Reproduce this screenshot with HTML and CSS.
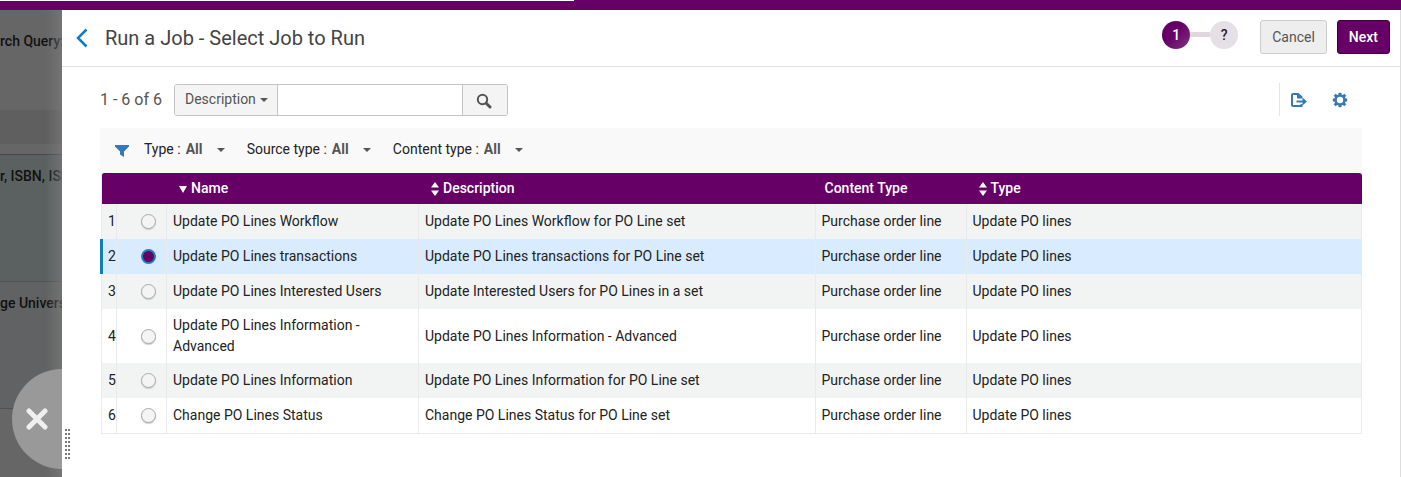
FILE: index.html
```
<!DOCTYPE html>
<html lang="en">
<head>
    <meta charset="UTF-8">
    <meta name="viewport" content="width=device-width, initial-scale=1.0">
    <title>Run a Job - Select Job to Run</title>
    <link rel="stylesheet" href="styles.css">
</head>
<body>
    <div class="top-bar"><div class="top-bar-edge"></div></div>
    <div class="layout">
        <aside class="backdrop">
            <div class="backdrop-query">rch Query:</div>
            <div class="backdrop-band"></div>
            <div class="backdrop-gap"></div>
            <div class="backdrop-record">r, ISBN, ISSN</div>
            <div class="backdrop-owner">ge University</div>
            <div class="backdrop-rest"></div>
            <button class="close-btn" type="button" aria-label="Close">
                <svg width="22" height="22" viewBox="0 0 22 22"><path d="M3 3L19 19M19 3L3 19" stroke="#f0f0f0" stroke-width="5" stroke-linecap="round"/></svg>
            </button>
        </aside>

        <main class="panel">
            <div class="drag-handle"></div>
            <header class="panel-header">
                <a class="back-link" href="#" aria-label="Back">
                    <svg width="12" height="20" viewBox="0 0 12 20"><path d="M10.500 1.500L2 10L10.500 18.500" fill="none" stroke="#0f7dc2" stroke-width="2.500"/></svg>
                </a>
                <h1>Run a Job - Select Job to Run</h1>
                <div class="steps">
                    <span class="step step-active">1</span>
                    <span class="step-line"></span>
                    <span class="step">?</span>
                </div>
                <button class="btn" type="button">Cancel</button>
                <button class="btn btn-primary" type="button">Next</button>
            </header>

            <section class="content">
                <div class="toolbar">
                    <span class="count">1 - 6 of 6</span>
                    <form class="search">
                        <button class="search-field" type="button">Description <span class="caret"></span></button>
                        <input class="search-input" type="text" aria-label="Search text">
                        <button class="search-btn" type="button" aria-label="Search">
                            <svg width="16" height="16" viewBox="0 0 16 16"><circle cx="6.500" cy="6.500" r="4.700" fill="none" stroke="#555" stroke-width="2"/><path d="M10.200 10.200L14 14" stroke="#555" stroke-width="3" stroke-linecap="round"/></svg>
                        </button>
                    </form>
                    <div class="tools">
                        <button class="icon-btn" type="button" aria-label="Export">
                            <svg width="18" height="16" viewBox="0 0 18 16"><path d="M11.500 6V5L8 2H3Q2 2 2 3V13Q2 14 3 14H11.500V12" fill="none" stroke="#337ab7" stroke-width="2"/><path d="M7 1V6.500H12.500Z" fill="#337ab7"/><path d="M6.500 9.500H14" stroke="#337ab7" stroke-width="2"/><path d="M12.500 5.500L17 9.500L12.500 13.500Z" fill="#337ab7"/></svg>
                        </button>
                        <button class="icon-btn" type="button" aria-label="Settings">
                            <svg width="16" height="16" viewBox="0 0 16 16"><circle cx="8" cy="8" r="4.500" fill="none" stroke="#337ab7" stroke-width="2.600"/><path d="M8 .8V3M8 13V15.200M.8 8H3M13 8H15.200M2.700 2.700L4.500 4.500M11.500 11.500L13.300 13.300M13.300 2.700L11.500 4.500M4.500 11.500L2.700 13.300" stroke="#337ab7" stroke-width="3"/></svg>
                        </button>
                    </div>
                </div>

                <div class="filters">
                    <svg class="filter-icon" width="14" height="12" viewBox="0 0 14 12"><path d="M0 0H14V1.500L9 6.500V12L5 9.500V6.500L0 1.500Z" fill="#337ab7"/></svg>
                    <div class="filter">
                        <label for="type">Type :</label>
                        <span class="filter-select"><select id="type"><option>All</option></select></span>
                    </div>
                    <div class="filter">
                        <label for="sourceType">Source type :</label>
                        <span class="filter-select"><select id="sourceType"><option>All</option></select></span>
                    </div>
                    <div class="filter">
                        <label for="contentType">Content type :</label>
                        <span class="filter-select"><select id="contentType"><option>All</option></select></span>
                    </div>
                </div>

                <table class="jobs">
                    <colgroup>
                        <col class="col-number">
                        <col class="col-radio">
                        <col class="col-name">
                        <col>
                        <col class="col-content">
                        <col>
                    </colgroup>
                    <thead>
                        <tr>
                            <th></th>
                            <th></th>
                            <th class="sortable"><svg width="8" height="14" viewBox="0 0 8 14"><path d="M0 4H8L4 11Z" fill="#fff"/></svg>Name</th>
                            <th class="sortable"><svg width="8" height="14" viewBox="0 0 8 14"><path d="M0 5.500H8L4 0ZM0 8.500H8L4 14Z" fill="#fff"/></svg>Description</th>
                            <th>Content Type</th>
                            <th class="sortable"><svg width="8" height="14" viewBox="0 0 8 14"><path d="M0 5.500H8L4 0ZM0 8.500H8L4 14Z" fill="#fff"/></svg>Type</th>
                        </tr>
                    </thead>
                    <tbody>
                        <tr>
                            <td>1</td>
                            <td><input type="radio" name="job" id="job1"></td>
                            <td><label for="job1">Update PO Lines Workflow</label></td>
                            <td>Update PO Lines Workflow for PO Line set</td>
                            <td>Purchase order line</td>
                            <td>Update PO lines</td>
                        </tr>
                        <tr class="selected">
                            <td>2</td>
                            <td><input type="radio" name="job" id="job2" checked></td>
                            <td><label for="job2">Update PO Lines transactions</label></td>
                            <td>Update PO Lines transactions for PO Line set</td>
                            <td>Purchase order line</td>
                            <td>Update PO lines</td>
                        </tr>
                        <tr>
                            <td>3</td>
                            <td><input type="radio" name="job" id="job3"></td>
                            <td><label for="job3">Update PO Lines Interested Users</label></td>
                            <td>Update Interested Users for PO Lines in a set</td>
                            <td>Purchase order line</td>
                            <td>Update PO lines</td>
                        </tr>
                        <tr>
                            <td>4</td>
                            <td><input type="radio" name="job" id="job4"></td>
                            <td><label for="job4">Update PO Lines Information - Advanced</label></td>
                            <td>Update PO Lines Information - Advanced</td>
                            <td>Purchase order line</td>
                            <td>Update PO lines</td>
                        </tr>
                        <tr>
                            <td>5</td>
                            <td><input type="radio" name="job" id="job5"></td>
                            <td><label for="job5">Update PO Lines Information</label></td>
                            <td>Update PO Lines Information for PO Line set</td>
                            <td>Purchase order line</td>
                            <td>Update PO lines</td>
                        </tr>
                        <tr>
                            <td>6</td>
                            <td><input type="radio" name="job" id="job6"></td>
                            <td><label for="job6">Change PO Lines Status</label></td>
                            <td>Change PO Lines Status for PO Line set</td>
                            <td>Purchase order line</td>
                            <td>Update PO lines</td>
                        </tr>
                    </tbody>
                </table>
            </section>
        </main>
    </div>
</body>
</html>
```

FILE: styles.css
```
* {
    box-sizing: border-box;
}
body {
    margin: 0;
    min-height: 100vh;
    display: flex;
    flex-direction: column;
    font-family: Roboto, 'Liberation Sans', sans-serif;
    font-size: 14px;
    line-height: 21px;
    color: #222;
    background: #fff;
}
button, input, select {
    font: inherit;
    color: inherit;
    margin: 0;
}
button {
    cursor: pointer;
}
svg {
    display: block;
}
.top-bar {
    height: 10px;
    background: #660066;
}
.top-bar-edge {
    width: 41%;
    height: 1px;
    background: #fff;
}
.layout {
    flex: 1;
    display: flex;
}

/* dimmed page behind the panel */
.backdrop {
    position: relative;
    width: 62px;
    overflow: hidden;
    display: flex;
    flex-direction: column;
    background: #666;
    color: #111;
    font-weight: 500;
    white-space: nowrap;
}
.backdrop::after {
    content: "";
    position: absolute;
    top: 0;
    right: 0;
    bottom: 0;
    width: 16px;
    background: linear-gradient(to right, rgba(125, 125, 125, 0), rgba(125, 125, 125, 0.6));
}
.backdrop-query {
    height: 100px;
    padding-top: 21px;
}
.backdrop-band {
    height: 34px;
    background: #5f5f5f;
}
.backdrop-gap {
    height: 10px;
}
.backdrop-record {
    height: 127px;
    padding-top: 11px;
    border-top: 1px solid #454848;
    background: #5b6161;
}
.backdrop-owner {
    height: 127px;
    padding-top: 11px;
    border-top: 1px solid #505252;
    background: #616263;
}
.backdrop-rest {
    flex: 1;
    border-top: 1px solid #505050;
}
.close-btn {
    position: absolute;
    z-index: 1;
    right: -50px;
    bottom: 8px;
    width: 100px;
    height: 100px;
    padding: 0 0 0 14px;
    border: none;
    border-radius: 50%;
    background: #999;
}

.panel {
    position: relative;
    flex: 1;
    min-width: 0;
    background: #fff;
    border-right: 1px solid #ddd;
}
.drag-handle {
    position: absolute;
    left: 3px;
    bottom: 18px;
    width: 5px;
    height: 30px;
    background: repeating-linear-gradient(#777 0 2px, #fff 2px 4px);
}
.drag-handle::after {
    content: "";
    display: block;
    width: 1px;
    height: 100%;
    margin-left: 2px;
    background: #fff;
}
.panel-header {
    display: flex;
    align-items: center;
    height: 57px;
    padding-left: 14px;
    padding-right: 10px;
    border-bottom: 1px solid #ddd;
}
.back-link {
    margin-right: 17px;
}
h1 {
    flex: 1;
    margin: 0;
    font-size: 20px;
    font-weight: 400;
    line-height: 24px;
    color: #444;
}
.steps {
    display: flex;
    align-items: center;
    margin: 0 22px 7px 0;
}
.step {
    width: 28px;
    height: 28px;
    border-radius: 50%;
    background: #e6dfe6;
    line-height: 28px;
    text-align: center;
    font-weight: 500;
}
.step-active {
    background: linear-gradient(135deg, #660066 40%, #803380);
    color: #fff;
}
.step-line {
    width: 20px;
    height: 5px;
    background: #e0d6e0;
}
.btn {
    height: 34px;
    margin-bottom: 2px;
    padding: 0 11px;
    border: 1px solid #ccc;
    border-radius: 3px;
    background: #eee;
    color: #555;
}
.btn-primary {
    margin-left: 10px;
    border-color: #400040;
    background: #660066;
    color: #fff;
    font-weight: 500;
}

.content {
    padding: 16px 38px 0;
}
.toolbar {
    display: flex;
    align-items: center;
    margin-bottom: 12px;
}
.count {
    margin-right: 12px;
    font-size: 16px;
    color: #555;
}
.search {
    display: flex;
    height: 32px;
    border: 1px solid #c4c4c8;
    border-radius: 3px;
    overflow: hidden;
}
.search-field, .search-btn {
    display: flex;
    align-items: center;
    justify-content: center;
    border: none;
    background: #f4f4f4;
    color: #555;
}
.search-field {
    gap: 4px;
    padding: 0 9px 0 10px;
}
.search-input {
    width: 186px;
    border: 1px solid #c4c4c8;
    border-width: 0 1px;
}
.search-btn {
    width: 44px;
    padding: 2px 2px 0 0;
}
.caret {
    border: 4px solid transparent;
    border-top-color: #555;
    border-bottom: 0;
}
.tools {
    display: flex;
    align-items: center;
    gap: 24px;
    height: 33px;
    margin-left: auto;
    padding: 0 14px 0 10px;
    border-left: 1px solid #e5e5e5;
}
.icon-btn {
    padding: 0;
    border: none;
    background: none;
}

.filters {
    display: flex;
    align-items: center;
    gap: 22px;
    height: 45px;
    padding: 0 15px 2px;
    background: #f9f9f9;
}
.filter-icon {
    margin: 2px -7px 0 0;
}
.filter {
    display: flex;
    gap: 5px;
}
.filter-select {
    position: relative;
}
.filter-select select {
    appearance: none;
    width: 39px;
    padding: 0;
    border: none;
    background: none;
    font-weight: 700;
    color: #555;
}
.filter-select::after {
    content: "";
    position: absolute;
    top: 9px;
    right: 0;
    border: 4px solid transparent;
    border-top-color: #555;
    border-bottom: 0;
    pointer-events: none;
}

.jobs {
    width: calc(100% - 1px);
    margin-left: 1px;
    table-layout: fixed;
    border-spacing: 0;
    border-bottom: 1px solid #eaeaea;
}
.col-number {
    width: 15px;
}
.col-radio {
    width: 50px;
}
.col-name {
    width: 252px;
}
.col-content {
    width: 151px;
}
.jobs th {
    height: 31px;
    padding: 0 10px;
    background: #660066;
    color: #fff;
    font-weight: 500;
    text-align: left;
}
.jobs th:first-child, .jobs th:nth-child(2) {
    padding: 0;
}
.jobs th:first-child {
    border-left: 1px solid #eaeaea;
    border-top-left-radius: 3px;
}
.jobs th:last-child {
    border-top-right-radius: 3px;
}
.jobs .sortable {
    padding-left: 13px;
}
.sortable svg {
    display: inline-block;
    margin-right: 4px;
    vertical-align: -3px;
}
.jobs td {
    height: 35px;
    padding: 6px;
    border-left: 1px solid #eaeaea;
}
.jobs td:first-child {
    padding-right: 0;
}
.jobs td:nth-child(2) {
    padding: 0 0 0 24px;
}
.jobs td:last-child {
    border-right: 1px solid #eaeaea;
}
.jobs tbody tr:nth-child(odd) {
    background: #f2f4f3;
}
.jobs tbody .selected {
    background: #d9ecff;
}
.selected td:first-child {
    border-left-color: #0f7dba;
    box-shadow: -1px 0 0 #0f7dba, inset 1px 0 0 #0f7dba;
}
.jobs input {
    appearance: none;
    display: block;
    width: 15px;
    height: 15px;
    border: 1px solid #aaa;
    border-radius: 50%;
    background: #f4f4f4;
    box-shadow: 0 1px 1px #ccc;
}
.jobs input:checked {
    border: 2px solid #1f80bd;
    background: #660066;
    box-shadow: none;
}
```
